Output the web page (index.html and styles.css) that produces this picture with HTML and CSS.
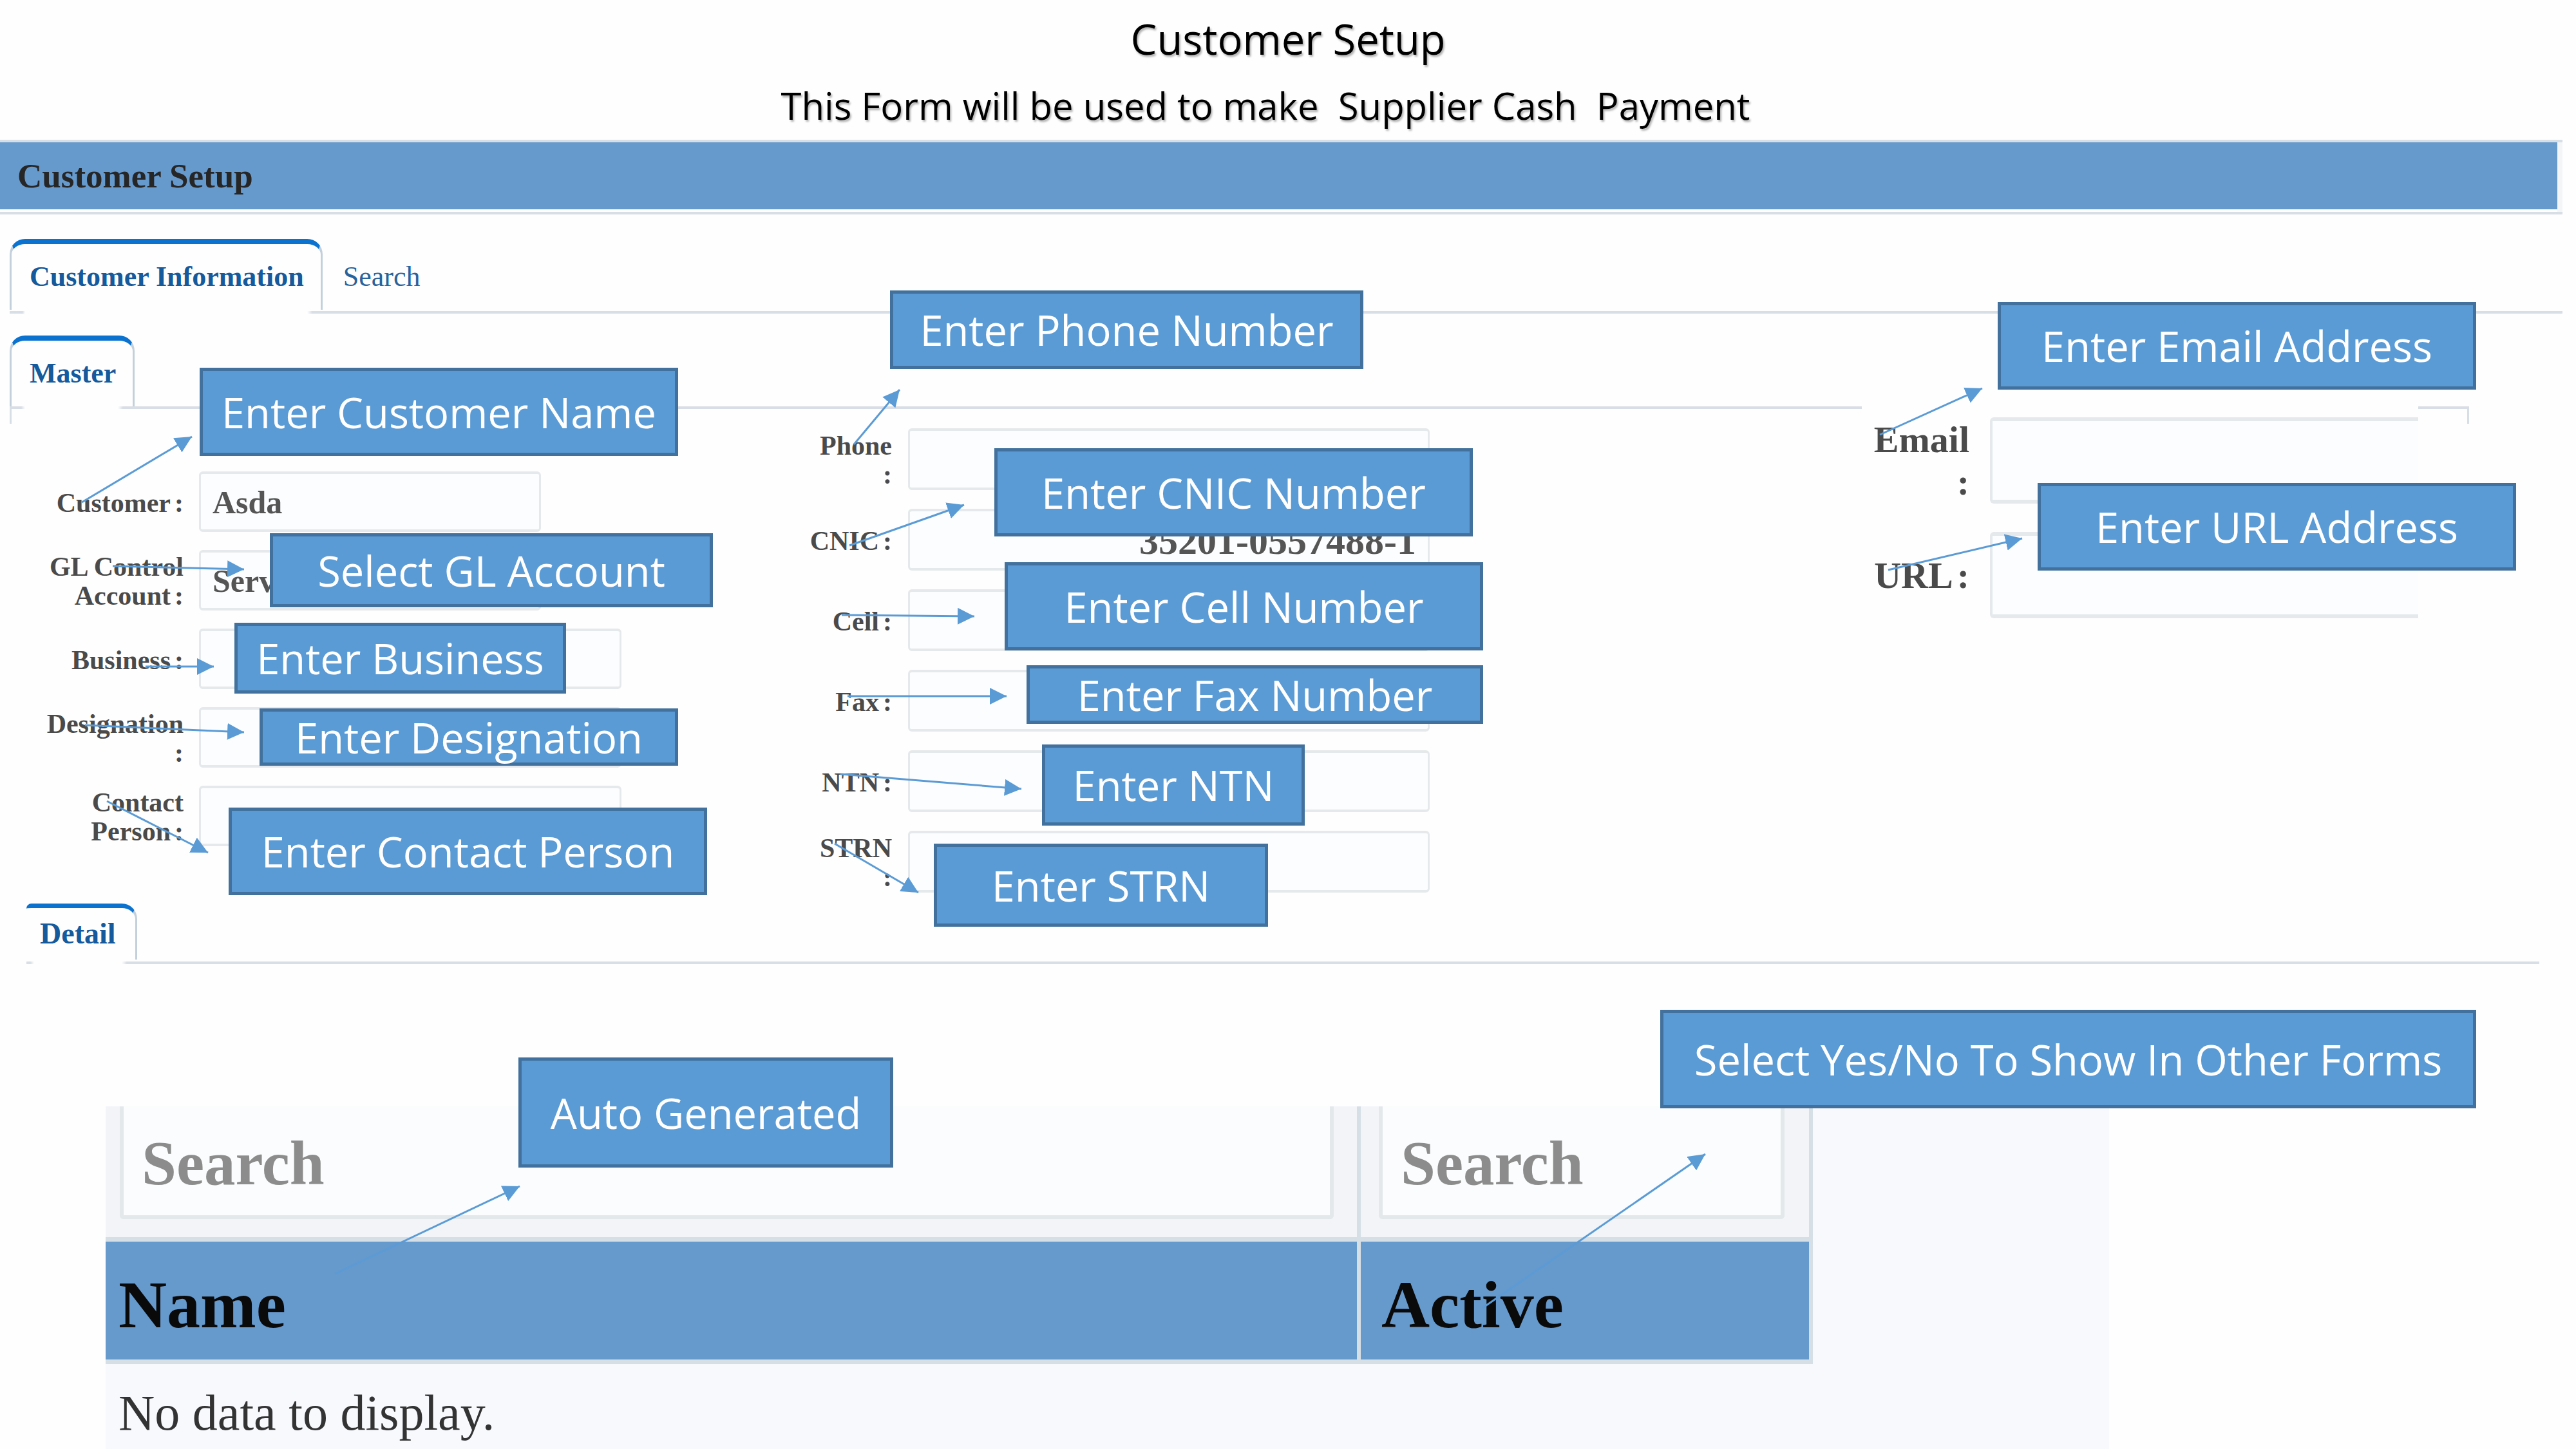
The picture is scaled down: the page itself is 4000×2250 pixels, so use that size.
FILE: index.html
```html
<!DOCTYPE html>
<html lang="en">
<head>
<meta charset="utf-8">
<title>Customer Setup</title>
<link rel="stylesheet" href="styles.css">
</head>
<body>
<main class="page">
  <header class="intro">
    <h1 class="intro-title">Customer Setup</h1>
    <p class="intro-text">This Form will be used to make&nbsp; Supplier Cash&nbsp; Payment</p>
  </header>

  <div class="title-bar"><h2 class="title-bar-text">Customer Setup</h2></div>

  <nav class="tabs tabs-main">
    <a class="tab tab-active" href="#info">Customer Information</a>
    <a class="tab" href="#search">Search</a>
  </nav>
  <div class="rule rule-main"></div>

  <nav class="tabs tabs-master">
    <a class="tab tab-active" href="#master">Master</a>
  </nav>
  <div class="panel-edge"></div>

  <form class="form" id="master">
    <div class="column column-left">
      <div class="field"><label for="customer">Customer<span class="colon">:</span></label><input class="short" id="customer" type="text" value="Asda"></div>
      <div class="field"><label for="gl">GL Control<br>Account<span class="colon">:</span></label><select class="short" id="gl"><option>Services</option></select></div>
      <div class="field"><label for="business">Business<span class="colon">:</span></label><input id="business" type="text"></div>
      <div class="field"><label for="designation">Designation<br>:</label><input id="designation" type="text"></div>
      <div class="field"><label for="contact">Contact<br>Person<span class="colon">:</span></label><input id="contact" type="text"></div>
    </div>
    <div class="column column-middle">
      <div class="field"><label for="phone">Phone<br>:</label><input id="phone" type="text"></div>
      <div class="field"><label for="cnic">CNIC<span class="colon">:</span></label><input class="number" id="cnic" type="text" value="35201-0557488-1"></div>
      <div class="field"><label for="cell">Cell<span class="colon">:</span></label><input id="cell" type="text"></div>
      <div class="field"><label for="fax">Fax<span class="colon">:</span></label><input id="fax" type="text"></div>
      <div class="field"><label for="ntn">NTN<span class="colon">:</span></label><input id="ntn" type="text"></div>
      <div class="field"><label for="strn">STRN<br>:</label><input id="strn" type="text"></div>
    </div>
    <div class="column column-right">
      <div class="field"><label for="email">Email<br>:</label><input id="email" type="text"></div>
      <div class="field"><label for="url">URL<span class="colon">:</span></label><input id="url" type="text"></div>
    </div>
  </form>

  <nav class="tabs tabs-detail">
    <a class="tab tab-active" href="#detail">Detail</a>
  </nav>
  <div class="rule rule-detail"></div>

  <section class="detail" id="detail">
    <table class="grid">
      <thead>
        <tr class="filters">
          <td><input type="text" placeholder="Search" aria-label="Search name"></td>
          <td><input type="text" placeholder="Search" aria-label="Search active"></td>
        </tr>
        <tr class="heads"><th scope="col">Name</th><th scope="col">Active</th></tr>
      </thead>
      <tbody>
        <tr class="empty"><td colspan="2">No data to display.</td></tr>
      </tbody>
    </table>
  </section>

  <div class="callout c-phone">Enter Phone Number</div>
  <div class="callout c-customer">Enter Customer Name</div>
  <div class="callout c-gl">Select GL Account</div>
  <div class="callout c-business">Enter Business</div>
  <div class="callout c-designation">Enter Designation</div>
  <div class="callout c-contact">Enter Contact Person</div>
  <div class="callout c-cnic">Enter CNIC Number</div>
  <div class="callout c-cell">Enter Cell Number</div>
  <div class="callout c-fax">Enter Fax Number</div>
  <div class="callout c-ntn">Enter NTN</div>
  <div class="callout c-strn">Enter STRN</div>
  <div class="callout c-email">Enter Email Address</div>
  <div class="callout c-url">Enter URL Address</div>
  <div class="callout c-name">Auto Generated</div>
  <div class="callout c-active">Select Yes/No To Show In Other Forms</div>

  <svg class="arrows" viewBox="0 0 4000 2250" preserveAspectRatio="none" aria-hidden="true">
    <defs>
      <marker id="head" markerUnits="userSpaceOnUse" markerWidth="26" markerHeight="26" refX="26" refY="13" orient="auto">
        <path d="M0 0 L26 13 L0 26 Z" fill="#5b9bd5"/>
      </marker>
    </defs>
    <g stroke="#5b9bd5" stroke-width="3" fill="none">
      <path marker-end="url(#head)" d="M127 780 L298 678"/>
      <path marker-end="url(#head)" d="M175 879 L379 884"/>
      <path marker-end="url(#head)" d="M226 1035 L332 1035"/>
      <path marker-end="url(#head)" d="M132 1126 L379 1137"/>
      <path marker-end="url(#head)" d="M166 1244 L323 1324"/>
      <path marker-end="url(#head)" d="M1326 690 L1397 605"/>
      <path marker-end="url(#head)" d="M1319 847 L1497 784"/>
      <path marker-end="url(#head)" d="M1307 955 L1513 957"/>
      <path marker-end="url(#head)" d="M1316 1081 L1563 1081"/>
      <path marker-end="url(#head)" d="M1305 1202 L1586 1225"/>
      <path marker-end="url(#head)" d="M1296 1310 L1426 1386"/>
      <path marker-end="url(#head)" d="M2919 675 L3078 603"/>
      <path marker-end="url(#head)" d="M2932 885 L3140 836"/>
      <path marker-end="url(#head)" d="M520 1978 L807 1842"/>
      <path marker-end="url(#head)" d="M2302 2031 L2648 1792"/>
    </g>
  </svg>
</main>
</body>
</html>
```

FILE: styles.css
```css
* { box-sizing: border-box; }

body {
  margin: 0;
  background: #fefefe;
  color: #4a4a4a;
  font-family: "Liberation Serif", serif;
}

.page { position: relative; }

/* Slide heading */
.intro {
  padding-top: 10px;
  color: #000;
  font-family: "Open Sans", sans-serif;
  text-align: center;
}
.intro-title, .intro-text {
  margin: 0;
  font-weight: 400;
  text-shadow: 2px 3px 3px #b4b4b4;
}
.intro-title { font-size: 65px; line-height: 100px; }
.intro-text { padding-right: 70px; font-size: 58px; line-height: 107px; }

/* Form title */
.title-bar {
  margin-right: 21px;
  padding-bottom: 4px;
  border: 4px solid #d8dee5;
  border-width: 4px 0;
  box-shadow: inset -8px 0 #f3f5f7;
}
.title-bar-text {
  margin: 0 8px 0 0;
  padding-left: 27px;
  background: #6699cc;
  color: #262626;
  font-size: 53px;
  line-height: 104px;
}

/* Tabs */
.tabs { display: flex; align-items: flex-start; padding-left: 15px; }
.tab {
  padding: 8px 32px 0;
  color: #27639c;
  font-size: 44px;
  line-height: 102px;
  text-decoration: none;
}
.tab-active {
  padding: 0 26px 0 28px;
  border: 3px solid #c3d0dc;
  border-top: 8px solid #0b72cf;
  border-bottom: 0;
  border-radius: 24px 24px 0 0;
  color: #155a9c;
  font-weight: 700;
}
.tabs-main { height: 112px; margin-top: 38px; }
.tabs-master { height: 110px; margin-top: 34px; }
.tabs-detail { height: 90px; margin-top: 17px; padding-left: 41px; }
.tabs-detail .tab {
  padding: 0 30px 0 21px;
  border-left: 0;
  border-top-width: 7px;
  border-top-left-radius: 8px;
  font-size: 46px;
  line-height: 80px;
}

.rule { height: 4px; }
.rule-main {
  margin: 0 21px 0 15px;
  background: linear-gradient(90deg, #d8dee5 20px, transparent 24px 462px, #d8dee5 470px);
}
.rule-detail {
  margin: 0 57px 0 41px;
  background: linear-gradient(90deg, #d8dee5 6px, transparent 12px 148px, #d8dee5 156px);
}
.panel-edge {
  height: 27px;
  margin: 0 166px -23px 15px;
  background:
    linear-gradient(90deg, #d8dee5 18px, transparent 24px 168px, #d8dee5 176px 2876px, transparent 2876px calc(100% - 79px), #d8dee5 calc(100% - 79px)) top / 100% 4px no-repeat,
    linear-gradient(#d8dee5, #d8dee5) left / 3px 100% no-repeat,
    linear-gradient(#d8dee5, #d8dee5) right / 3px 100% no-repeat;
}

/* Master form */
.form {
  display: grid;
  grid-template-columns: 965fr 1255fr 1535fr 245fr;
}
.column { display: flex; flex-direction: column; min-width: 0; }
.field { display: grid; align-items: center; }
.field label {
  padding-top: 4px;
  font-size: 42px;
  font-weight: 700;
  line-height: 45px;
  text-align: right;
}
.colon { margin-left: 6px; }
.field input, .field select {
  width: 100%;
  min-width: 0;
  height: 94px;
  padding: 2px 18px 0;
  border: 4px solid #e5e9eb;
  border-width: 4px 3px;
  border-radius: 6px;
  background: #fcfdff;
  color: #555;
  font: 700 50px "Liberation Serif", serif;
  appearance: none;
}
.field .short { width: 81%; }
.field .number { padding-top: 4px; font-size: 60px; text-align: right; }

.column-left { gap: 28px; padding-top: 97px; }
.column-left .field { grid-template-columns: 285fr 656fr; column-gap: 24px; }

.column-middle { gap: 29px; padding-top: 30px; }
.column-middle .field { grid-template-columns: 420fr 810fr; column-gap: 25px; }
.column-middle input { height: 96px; }

.column-right { gap: 44px; padding-top: 13px; }
.column-right .field { grid-template-columns: 838fr 665fr; column-gap: 32px; }
.column-right label { padding-top: 2px; font-size: 58px; line-height: 66px; }
.column-right input {
  height: 134px;
  border-width: 6px 0 6px 4px;
  border-radius: 6px 0 0 6px;
}

/* Detail grid */
.detail {
  width: 78%;
  max-width: 3111px;
  margin-top: 221px;
  margin-left: 164px;
  background: #f7f9fd;
}
.grid { width: 85.2%; border-collapse: collapse; table-layout: fixed; }
.grid td, .grid th { padding: 0; text-align: left; vertical-align: top; }
.filters td { height: 206px; border-right: 6px solid #d6dfe6; background: #f2f4f8; }
.grid .filters td:first-child { width: 73.5%; padding: 0 36px 0 22px; }
.grid .filters td:last-child { padding: 0 38px 0 28px; }
.filters input {
  display: block;
  width: 100%;
  height: 175px;
  padding: 8px 28px 0;
  border: 6px solid #e3e8ea;
  border-top: 0;
  border-radius: 0 0 6px 6px;
  background: #fafcfd;
  font: 700 97px "Liberation Serif", serif;
}
.filters input::placeholder { color: #8c8c8c; opacity: 1; }
.grid .heads th {
  height: 190px;
  padding: 14px 0 0 20px;
  border: 7px solid #d6dfe6;
  border-width: 7px 6px 7px 0;
  background: #6699cc;
  color: #0a0a0a;
  font-size: 104px;
  line-height: 168px;
}
.grid .heads th:last-child { padding-left: 32px; }
.grid .empty td {
  height: 133px;
  padding: 20px 0 0 20px;
  color: #333;
  font-size: 78px;
  line-height: 112px;
}

/* Annotations over the form */
.callout {
  position: absolute;
  display: flex;
  align-items: center;
  justify-content: center;
  border: 5px solid #41719c;
  background: #5b9bd5;
  color: #fff;
  font-family: "Open Sans", sans-serif;
  font-size: 65px;
  line-height: 80px;
  white-space: nowrap;
}
.c-phone { left: 1382px; top: 451px; width: 735px; height: 122px; }
.c-customer { left: 310px; top: 571px; width: 743px; height: 137px; }
.c-gl { left: 419px; top: 828px; width: 688px; height: 115px; }
.c-business { left: 364px; top: 967px; width: 515px; height: 110px; }
.c-designation { left: 403px; top: 1100px; width: 650px; height: 89px; }
.c-contact { left: 355px; top: 1254px; width: 743px; height: 136px; }
.c-cnic { left: 1544px; top: 696px; width: 743px; height: 137px; }
.c-cell { left: 1560px; top: 873px; width: 743px; height: 137px; }
.c-fax { left: 1594px; top: 1033px; width: 709px; height: 91px; }
.c-ntn { left: 1618px; top: 1156px; width: 408px; height: 126px; }
.c-strn { left: 1450px; top: 1310px; width: 519px; height: 129px; }
.c-email { left: 3102px; top: 469px; width: 743px; height: 136px; }
.c-url { left: 3164px; top: 750px; width: 743px; height: 136px; }
.c-name { left: 805px; top: 1642px; width: 582px; height: 171px; }
.c-active { left: 2578px; top: 1568px; width: 1267px; height: 153px; }

.arrows { position: absolute; top: 0; left: 0; width: 100%; height: 2250px; pointer-events: none; }
```
